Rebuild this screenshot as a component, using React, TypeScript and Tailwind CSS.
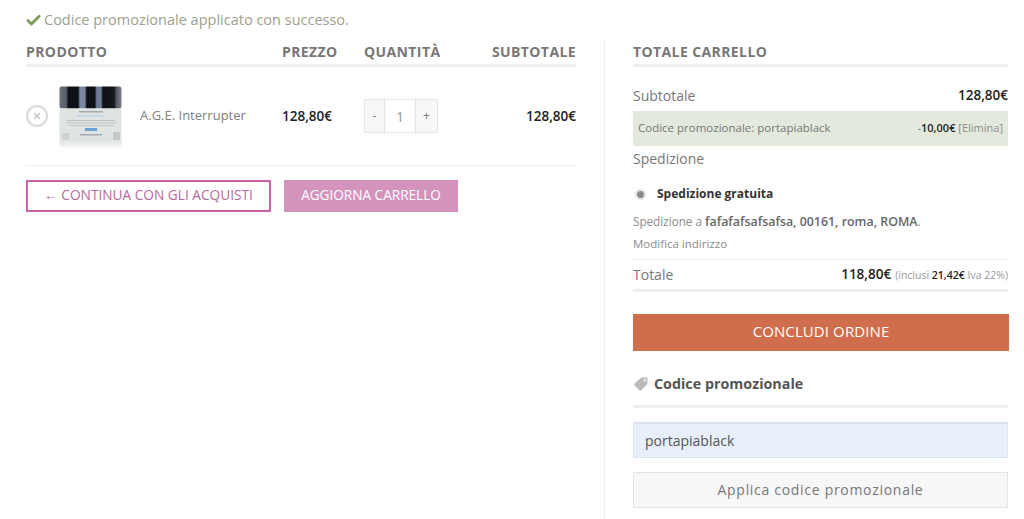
import { Check, X } from "lucide-react";

function ProductImage() {
  return (
    <svg width="64" height="64" viewBox="0 0 64 64" className="shrink-0">
      <defs>
        <linearGradient id="lid" x1="0" x2="1" y1="0" y2="0">
          <stop offset="0" stopColor="#6b707a" />
          <stop offset="0.11" stopColor="#585d68" />
          <stop offset="0.14" stopColor="#101114" />
          <stop offset="0.3" stopColor="#101114" />
          <stop offset="0.33" stopColor="#79879f" />
          <stop offset="0.41" stopColor="#79879f" />
          <stop offset="0.44" stopColor="#101114" />
          <stop offset="0.57" stopColor="#101114" />
          <stop offset="0.6" stopColor="#6d7b94" />
          <stop offset="0.67" stopColor="#6d7b94" />
          <stop offset="0.7" stopColor="#101114" />
          <stop offset="0.88" stopColor="#16181c" />
          <stop offset="0.92" stopColor="#565b66" />
          <stop offset="1" stopColor="#7a7f88" />
        </linearGradient>
        <linearGradient id="fade" x1="0" x2="0" y1="0" y2="1">
          <stop offset="0" stopColor="#dfe3e1" />
          <stop offset="1" stopColor="#ffffff" />
        </linearGradient>
      </defs>
      <rect x="0.5" y="0.5" width="62" height="22" rx="2" fill="url(#lid)" />
      <rect x="0.5" y="22.5" width="62" height="33" fill="#dfe3e1" />
      <rect x="0.5" y="55.5" width="62" height="7" fill="url(#fade)" />
      <rect x="20" y="25" width="24" height="1.5" fill="#a4aab0" />
      <rect x="18" y="29" width="28" height="2" fill="#c4d8ea" />
      <rect x="8" y="34" width="48" height="1" fill="#bcc2c4" />
      <rect x="7" y="36.5" width="50" height="1" fill="#bcc2c4" />
      <rect x="9" y="39" width="46" height="1" fill="#c4c9cb" />
      <rect x="26" y="42" width="12" height="3" fill="#6d9fd4" />
      <rect x="21" y="48" width="22" height="1.5" fill="#a4aab0" />
      <rect x="3" y="47" width="7" height="7" fill="#c6cbc9" opacity="0.7" />
      <rect x="54" y="46" width="7" height="8" fill="#b8bebc" opacity="0.7" />
    </svg>
  );
}

function HeaderCell({ children, className = "" }: { children: React.ReactNode; className?: string }) {
  return <div className={`text-[14px] font-bold tracking-[0.4px] text-[#777] ${className}`}>{children}</div>;
}

export default function App() {
  return (
    <div className="flex h-[519px] w-[1024px] overflow-hidden bg-white pl-[26px] font-['Open_Sans',sans-serif] text-[#777]">
      <div className="w-[550px] shrink-0">
        <div className="flex h-[40px] items-center text-[14.5px] text-[#a0a08c]">
          <Check size={17} strokeWidth={4} className="-ml-[1px] mr-[2px] text-[#7d9c5c]" />
          Codice promozionale applicato con successo.
        </div>

        <div className="grid h-[27px] grid-cols-[256px_82px_90px_1fr] items-center border-b-[3px] border-[#eee] pb-[2px]">
          <HeaderCell>PRODOTTO</HeaderCell>
          <HeaderCell>PREZZO</HeaderCell>
          <HeaderCell>QUANTITÀ</HeaderCell>
          <HeaderCell className="text-right">SUBTOTALE</HeaderCell>
        </div>

        <div className="grid h-[99px] grid-cols-[256px_82px_90px_1fr] items-center border-b border-[#eee]">
          <div className="flex items-center">
            <div className="flex h-[22px] w-[22px] items-center justify-center rounded-full border-2 border-[#d9d9d9]">
              <X size={10} strokeWidth={3} className="text-[#c0c0c0]" />
            </div>
            <div className="ml-[11px] mt-[4px] flex">
              <ProductImage />
            </div>
            <span className="ml-[17px] text-[13px] text-[#808080]">A.G.E. Interrupter</span>
          </div>
          <div className="text-[13.5px] font-semibold text-[#222]">128,80€</div>
          <div className="flex h-[34px] w-[74px] border border-[#e4e4e4] text-[12px]">
            <div className="flex w-[19px] items-center justify-center bg-[#f7f7f7]">-</div>
            <div className="flex flex-1 items-center justify-center border-x border-[#e4e4e4] text-[14px] text-[#8a9aa5]">1</div>
            <div className="flex w-[21px] items-center justify-center bg-[#f7f7f7]">+</div>
          </div>
          <div className="text-right text-[13.5px] font-semibold text-[#222]">128,80€</div>
        </div>

        <div className="mt-[14px] flex gap-[13px]">
          <button className="flex h-[32px] w-[245px] items-center justify-center border-2 border-[#c864a5] pb-[1px] text-[13.7px] text-[#b56a9c]">
            ← CONTINUA CON GLI ACQUISTI
          </button>
          <button className="flex h-[32px] w-[174px] items-center justify-center bg-[#d493bd] pb-[1px] text-[13.6px] text-white">
            AGGIORNA CARRELLO
          </button>
        </div>
      </div>

      <div className="ml-[28px] mt-[40px] w-[1px] shrink-0 bg-[#eee]" />

      <div className="ml-[28px] w-[375px] shrink-0 pt-[40px]">
        <div className="flex h-[27px] items-center border-b-[3px] border-[#eee] pb-[2px] text-[14px] font-bold tracking-[0.4px] text-[#777]">
          TOTALE CARRELLO
        </div>

        <div className="flex h-[44px] items-center justify-between pt-[13px] text-[14px]">
          <span>Subtotale</span>
          <span className="text-[13.5px] font-semibold text-[#222]">128,80€</span>
        </div>

        <div className="flex h-[35px] items-center justify-between bg-[#e4e9de] px-[5px] pb-[1px] text-[11px] text-[#777]">
          <span className="text-[11.5px]">Codice promozionale: portapiablack</span>
          <span>
            -<b className="font-semibold text-[#222]">10,00€</b> <span className="text-[#8b8b8b]">[Elimina]</span>
          </span>
        </div>

        <div className="flex h-[25px] items-center text-[14px]">Spedizione</div>

        <div className="mt-[13px] flex h-[20px] items-center pl-[2px] text-[12px] font-bold text-[#333]">
          <span className="flex h-[11px] w-[11px] items-center justify-center rounded-full border border-[#ddd] bg-[#eee]">
            <span className="h-[7px] w-[7px] rounded-full bg-[#8a8a8a]" />
          </span>
          <span className="ml-[11px]">Spedizione gratuita</span>
        </div>

        <div className="mt-[8px] flex h-[20px] items-center text-[11.7px] text-[#8b8b8b]">
          <span>
            Spedizione a <b className="text-[12.4px] font-semibold text-[#666]">fafafafsafsafsa, 00161, roma, ROMA</b>.
          </span>
        </div>

        <div className="mt-[2px] flex h-[20px] items-center text-[11.5px] text-[#8b8b8b]">Modifica indirizzo</div>

        <div className="mt-[5px] flex h-[33px] items-center justify-between border-y border-t-[#eee] border-b-[3px] border-b-[#eee] text-[14px]">
          <span>Totale</span>
          <span className="flex items-baseline">
            <span className="text-[13.5px] font-semibold text-[#222]">118,80€</span>
            <span className="ml-[4px] text-[10.5px] text-[#999]">
              (inclusi <b className="font-semibold text-[#222]">21,42€</b> Iva 22%)
            </span>
          </span>
        </div>

        <button className="mt-[22px] flex h-[37px] w-[376px] items-center justify-center bg-[#cf6e4c] pb-[2px] text-[15px] tracking-[0.1px] text-white">
          CONCLUDI ORDINE
        </button>

        <div className="mt-[21px] flex h-[24px] items-center text-[14.3px] font-bold text-[#555]">
          <svg width="16" height="16" viewBox="0 0 16 16" className="mr-[5px] shrink-0">
            <path
              fillRule="evenodd"
              fill="#bbb"
              d="M8.5 1.5h5.2c.5 0 .8.3.8.8V8L8 14.5c-.4.4-.9.4-1.300 0L1.200 9c-.4-.4-.4-.9 0-1.300L8.500 1.500zM11.800 3.200a1.100 1.100 0 1 0 0 2.200 1.100 1.100 0 0 0 0-2.200z"
            />
          </svg>
          Codice promozionale
        </div>

        <div className="mt-[9px] h-[3px] bg-[#eee]" />

        <div className="mt-[14px] flex h-[36px] items-center border border-t-[2px] border-[#dde4ee] bg-[#e8f0fc] px-[11px] pb-[1px] text-[14px] text-[#555]">
          portapiablack
        </div>

        <button className="mt-[14px] flex h-[36px] w-full items-center justify-center border border-[#e4e4e4] bg-[#f7f7f7] pb-[1px] text-[14px] tracking-[0.7px] text-[#777]">
          Applica codice promozionale
        </button>
      </div>
    </div>
  );
}
